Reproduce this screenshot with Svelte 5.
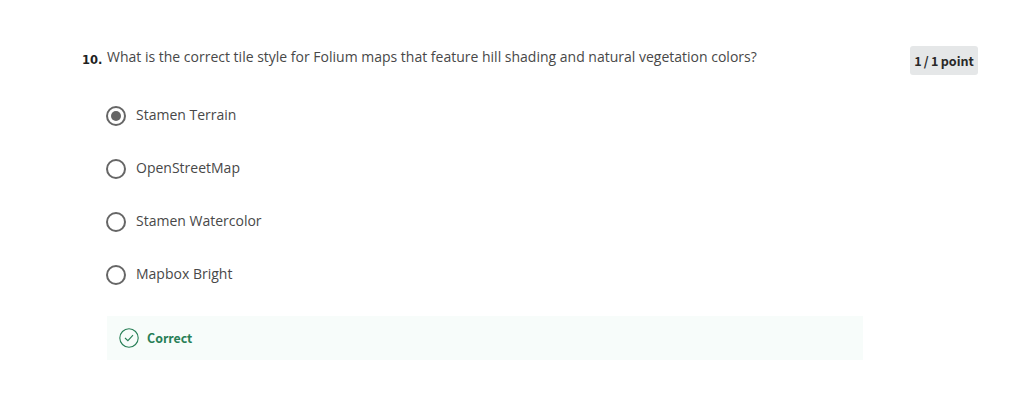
<script>
  const options = ['Stamen Terrain', 'OpenStreetMap', 'Stamen Watercolor', 'Mapbox Bright'];
  let selected = $state(0);
</script>

<main>
  <span class="number">10.</span>
  <section>
    <p class="prompt">What is the correct tile style for Folium maps that feature hill shading and natural vegetation colors?</p>
    <div class="options">
      {#each options as option, i}
        <label>
          <input type="radio" name="answer" value={i} bind:group={selected} />
          <svg width="20" height="20" viewBox="0 0 20 20">
            <circle cx="10" cy="10" r="9" fill="none" stroke="#666" stroke-width="2" />
            {#if selected === i}<circle cx="10" cy="10" r="5" fill="#666" />{/if}
          </svg>
          <span>{option}</span>
        </label>
      {/each}
    </div>
    <div class="feedback">
      <svg width="20" height="20" viewBox="0 0 20 20" fill="none" stroke="#287f57" stroke-width="1.1">
        <circle cx="10" cy="10" r="9.2" />
        <path d="M6 10l2.9 2.7 5.1-5.5" />
      </svg>
      <strong>Correct</strong>
    </div>
  </section>
  <span class="points">1 / 1 point</span>
</main>

<style>
  :global(body) { background: #fff; }
  main {
    display: flex;
    align-items: flex-start;
    height: 402px;
    box-sizing: border-box;
    padding: 46px 0 0 82px;
    font-family: "Open Sans", sans-serif;
    font-size: 14px;
    color: #484848;
    white-space: nowrap;
  }
  .points, strong { font-family: "Noto Sans CJK SC", sans-serif; font-weight: 700; }
  .number { width: 25px; padding-top: 4px; line-height: 20px; font-family: "DejaVu Sans", sans-serif; font-weight: 700; font-size: 11.5px; color: #1f1f1f; flex: none; }
  section { width: 756px; flex: none; }
  .prompt { margin: 0; line-height: 22px; }
  .options { display: flex; flex-direction: column; gap: 33px; margin-top: 38px; }
  label { display: flex; align-items: center; height: 20px; margin-left: -1px; gap: 10px; }
  label span { padding-bottom: 3px; }
  input { position: absolute; opacity: 0; }
  .feedback {
    display: flex;
    align-items: center;
    gap: 8px;
    height: 44px;
    margin-top: 31px;
    padding-left: 12px;
    box-sizing: border-box;
    background: #f7fcfa;
    color: #287f57;
    font-size: 12.4px;
  }
  strong { line-height: 20px; }
  .points {
    width: 68px;
    height: 29px;
    margin-left: 47px;
    line-height: 29px;
    border-radius: 3px;
    background: #e5e7e8;
    color: #292929;
    font-size: 12.6px;
    word-spacing: -.6px;
    text-align: center;
    flex: none;
  }
</style>
